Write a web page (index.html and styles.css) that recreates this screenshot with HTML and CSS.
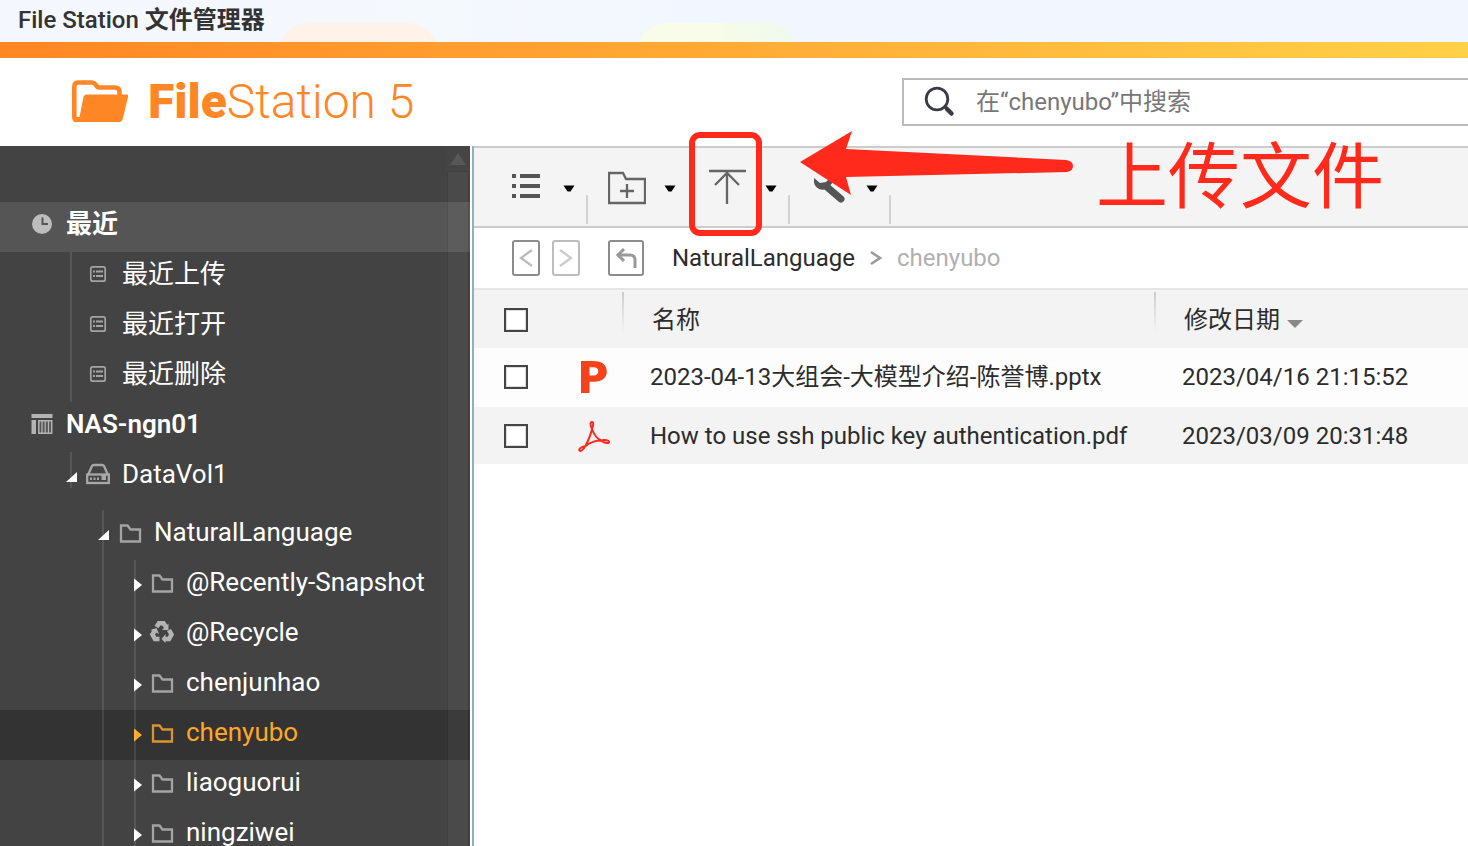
FILE: index.html
```html
<!DOCTYPE html>
<html lang="zh-CN">
<head>
<meta charset="utf-8">
<title>File Station 文件管理器</title>
<link rel="stylesheet" href="styles.css">
</head>
<body>
<svg class="defs" aria-hidden="true">
  <symbol id="folder" viewBox="0 0 24 24"><path d="M3 20.500V4.500H9.500L12.500 8.500H22V20.500Z" fill="none" stroke="currentColor" stroke-width="2.300"/></symbol>
  <symbol id="list-box" viewBox="0 0 24 24"><rect x="4.800" y="3.800" width="14.400" height="14.400" rx="2" fill="none" stroke="currentColor" stroke-width="1.700"/><path d="M7 8.500H9M10 8.500H17M7 13H9M10 13H17" stroke="currentColor" stroke-width="2"/></symbol>
  <symbol id="open" viewBox="0 0 14 20"><path d="M13 7V17H2Z" fill="currentColor"/></symbol>
  <symbol id="closed" viewBox="0 0 14 20"><path d="M6 5.500L14 12L6 18.500Z" fill="currentColor"/></symbol>
  <symbol id="drop" viewBox="0 0 12 8"><path d="M.500 1.500H11.500L7.500 7.500H4.500Z" fill="currentColor"/></symbol>
</svg>
<div class="app">
  <div class="titlebar">
    <span class="blob blob-peach"></span>
    <span class="blob blob-green"></span>
    <h1 class="window-title">File Station <b>文件管理器</b></h1>
  </div>
  <div class="strip"></div>
  <header class="header">
    <div class="brand">
      <svg class="brand-icon" viewBox="0 0 56 44" aria-hidden="true">
        <path d="M4 40Q2.300 40 2.300 36V7Q2.300 2.500 6 2.500H20Q22 2.500 23 4L25 6.500Q26 7.500 28 7.500H43Q47.500 7.500 47.500 12V17" fill="none" stroke="#ff8624" stroke-width="4.600"/>
        <path d="M11.500 17Q12 14.500 14.500 14.500H55Q56.500 14.500 56 17L51 38Q50 42 47 42H5Q1 42 .500 37L7.500 37Z" fill="#ff8624"/>
      </svg>
      <span class="brand-name"><b>File</b>Station 5</span>
    </div>
    <label class="search">
      <svg class="search-icon" viewBox="0 0 32 32" aria-hidden="true"><circle cx="14" cy="13" r="10.800" fill="none" stroke="#3b3b48" stroke-width="2.800"/><path d="M21.500 20.500L24.500 23.500" stroke="#3b3b48" stroke-width="3"/><path d="M24 23L28.500 27.500" stroke="#3b3b48" stroke-width="4.500" stroke-linecap="round"/></svg>
      <input class="search-input" type="text" aria-label="搜索" placeholder="在“chenyubo”中搜索">
    </label>
  </header>
  <div class="body">
    <nav class="sidebar">
      <a class="row row-hover" href="#"><i class="twist"></i>
        <svg class="ico" viewBox="0 0 24 24"><circle cx="12" cy="11" r="10" fill="#bdbdbd"/><path d="M12.500 4.500V11H18" fill="none" stroke="#555" stroke-width="2"/></svg><b>最近</b></a>
      <div class="branch guide-one">
        <a class="row d1" href="#"><i class="twist"></i><svg class="ico"><use href="#list-box"/></svg>最近上传</a>
        <a class="row d1" href="#"><i class="twist"></i><svg class="ico"><use href="#list-box"/></svg>最近打开</a>
        <a class="row d1" href="#"><i class="twist"></i><svg class="ico"><use href="#list-box"/></svg>最近删除</a>
      </div>
      <a class="row" href="#"><i class="twist"></i>
        <svg class="ico" viewBox="0 0 24 24"><path d="M1.500 1H22.500V5H1.500ZM1.500 7H6V21H1.500Z" fill="#b4b4b4"/><path d="M8.800 7.800H21.700V20.300H8.800Z" fill="#555" stroke="#b4b4b4" stroke-width="1.500"/><path d="M12 8V20M15.200 8V20M18.500 8V20" stroke="#b4b4b4" stroke-width="1.300"/></svg><b>NAS-ngn01</b></a>
      <div class="branch guide-short">
        <a class="row d1" href="#"><svg class="twist"><use href="#open"/></svg>
          <svg class="ico" viewBox="0 0 24 24"><path d="M2 12L6 3Q6.500 2 8 2H16Q17.500 2 18 3L22 12" fill="none" stroke="#a8a8a8" stroke-width="2.300"/><rect x="1.200" y="11.500" width="21.600" height="8.500" fill="none" stroke="#a8a8a8" stroke-width="2.300"/><path d="M4 14.500H6V17H4ZM7.500 14.500H9.500V17H7.500ZM11 14.500H13V17H11ZM15.500 12H20V17H15.500Z" fill="#a8a8a8"/></svg>DataVol1</a>
      </div>
      <div class="branch guide-two">
        <a class="row d2" href="#"><svg class="twist"><use href="#open"/></svg><svg class="ico"><use href="#folder"/></svg>NaturalLanguage</a>
        <div class="branch guide-three">
          <a class="row d3" href="#"><svg class="twist"><use href="#closed"/></svg><svg class="ico"><use href="#folder"/></svg>@Recently-Snapshot</a>
          <a class="row d3" href="#"><svg class="twist"><use href="#closed"/></svg>
            <svg class="ico" viewBox="0 0 24 24"><g fill="none" stroke="#b4b4b4" stroke-width="4.600"><path d="M6.500 6L9 2.300H13.500L16 6"/><path d="M19 9L21.500 13.500L19 18H14"/><path d="M9.500 18H5L2.500 13.500L5 9"/></g><path d="M18.500 2.500V9H12ZM15.500 13V22L11.500 18ZM.500 9L6.500 7L9 13Z" fill="#b4b4b4"/></svg>@Recycle</a>
          <a class="row d3" href="#"><svg class="twist"><use href="#closed"/></svg><svg class="ico"><use href="#folder"/></svg>chenjunhao</a>
          <a class="row d3 row-current" href="#" aria-current="true"><svg class="twist"><use href="#closed"/></svg><svg class="ico"><use href="#folder"/></svg>chenyubo</a>
          <a class="row d3" href="#"><svg class="twist"><use href="#closed"/></svg><svg class="ico"><use href="#folder"/></svg>liaoguorui</a>
          <a class="row d3" href="#"><svg class="twist"><use href="#closed"/></svg><svg class="ico"><use href="#folder"/></svg>ningziwei</a>
        </div>
      </div>
      <div class="scrollbar"><svg class="scroll-up" viewBox="0 0 16 12" aria-hidden="true"><path d="M8 0L16 12H0Z" fill="#575757"/></svg><div class="thumb"></div></div>
    </nav>
    <main class="main">
      <div class="toolbar">
        <button class="tool" type="button" aria-label="视图">
          <svg class="tool-icon" viewBox="0 0 38 40"><path d="M5 9H9M13 9H33M5 19H9M13 19H33M5 29H9M13 29H33" stroke="#555" stroke-width="4"/></svg>
          <svg class="drop"><use href="#drop"/></svg></button>
        <button class="tool tool-joined" type="button" aria-label="新建文件夹">
          <svg class="tool-icon" viewBox="0 0 38 40"><path d="M1 36V6H15L18 12H37V36ZM19 17V31M12 24H26" fill="none" stroke="#666" stroke-width="2.300"/></svg>
          <svg class="drop"><use href="#drop"/></svg></button>
        <button class="tool" type="button" aria-label="上传">
          <svg class="tool-icon" viewBox="0 0 38 40"><path d="M0 4H37M18 5V37M6 18L18 6L30 18" fill="none" stroke="#666" stroke-width="2.300"/></svg>
          <svg class="drop"><use href="#drop"/></svg><span class="mark-box"></span></button>
        <button class="tool" type="button" aria-label="工具">
          <svg class="tool-icon" viewBox="0 0 38 40"><path d="M17 20L31 32" stroke="#555" stroke-width="7" stroke-linecap="round"/><path d="M4 11Q3 19 9 22Q14 24 18 21L24 14Q25 8 20 4L20 11L16 15L10 16Z" fill="#555"/></svg>
          <svg class="drop"><use href="#drop"/></svg></button>
        <svg class="mark-arrow" viewBox="0 0 274 66" aria-hidden="true"><path d="M0 32L52 1L46 19L266 30Q273 31 273 36Q273 41 267 42L46 47L51 65Z" fill="#ff2a1c"/></svg>
        <span class="mark-text">上传文件</span>
      </div>
      <div class="pathbar">
        <button class="nav-btn" type="button" aria-label="后退"><svg viewBox="0 0 28 36"><rect x="1" y="1" width="26" height="34" rx="2" fill="none" stroke="#8b8b8b" stroke-width="2"/><path d="M20 10L9 18L20 26" fill="none" stroke="#bbb" stroke-width="2.300"/></svg></button>
        <button class="nav-btn" type="button" aria-label="前进"><svg viewBox="0 0 28 36"><rect x="1" y="1" width="26" height="34" rx="2" fill="none" stroke="#bdbdbd" stroke-width="2"/><path d="M8 10L19 18L8 26" fill="none" stroke="#ccc" stroke-width="2.300"/></svg></button>
        <button class="nav-btn nav-up" type="button" aria-label="上一级"><svg viewBox="0 0 36 36"><rect x="1" y="1" width="34" height="34" rx="2" fill="none" stroke="#8b8b8b" stroke-width="2"/><path d="M10 15H22Q27 15 27 20V28" fill="none" stroke="#999" stroke-width="3"/><path d="M16 9L10 15L16 21" fill="none" stroke="#999" stroke-width="3"/></svg></button>
        <div class="crumbs"><a class="crumb" href="#">NaturalLanguage</a><svg class="crumb-sep" viewBox="0 0 12 16"><path d="M1 2L10 8L1 14" fill="none" stroke="#999" stroke-width="2.500"/></svg><span class="crumb-now">chenyubo</span></div>
      </div>
      <table class="files">
        <colgroup><col class="c-check"><col class="c-icon"><col><col class="c-date"></colgroup>
        <thead><tr>
          <th class="check"><input type="checkbox" aria-label="全选"></th><td></td>
          <th class="split">名称</th>
          <th class="split">修改日期<svg class="sort" viewBox="0 0 16 8"><path d="M0 0H16L8 8Z" fill="#888"/></svg></th>
        </tr></thead>
        <tbody>
          <tr><td class="check"><input type="checkbox" aria-label="选择 pptx"></td>
            <td class="kind"><svg viewBox="0 0 32 32"><path fill-rule="evenodd" d="M3 0H15C24 0 28.800 4 28.800 10.500C28.800 17 24 20.800 16 20.800H11.500V32H3ZM11.500 6.200V14.500H15.500C18.500 14.500 20.300 13 20.300 10.300C20.300 7.700 18.500 6.200 15.500 6.200Z" fill="#f6421b"/></svg></td>
            <td class="text">2023-04-13大组会-大模型介绍-陈誉博.pptx</td><td class="text">2023/04/16 21:15:52</td></tr>
          <tr><td class="check"><input type="checkbox" aria-label="选择 pdf"></td>
            <td class="kind"><svg viewBox="0 0 32 32"><path d="M14 9C12 5 12 2 14 2C15.800 2 15.500 5 14 9C16.500 16 19 18.500 23 20.500C27 19.500 31 20.500 31 22C31 24 26 23 23 20.500C18 20.500 12 22.500 7.500 26C5 30 2.500 32 1.500 30.500C.500 29 3 27 7.500 26C10 21 12.500 16 14 9Z" fill="none" stroke="#fb2a20" stroke-width="2"/></svg></td>
            <td class="text">How to use ssh public key authentication.pdf</td><td class="text">2023/03/09 20:31:48</td></tr>
        </tbody>
      </table>
    </main>
  </div>
</div>
</body>
</html>
```
FILE: styles.css
```css
* { box-sizing: border-box; }
body {
  margin: 0;
  font-family: Roboto, "Noto Sans CJK SC", sans-serif;
  font-size: 24px;
  color: #2c2c2c;
  background: #fff;
}
a { color: inherit; text-decoration: none; }
button { padding: 0; border: 0; background: none; color: inherit; font: inherit; }
svg { display: block; flex: none; }
.defs { position: absolute; width: 0; height: 0; }
.app { display: flex; flex-direction: column; height: 100vh; overflow: hidden; }

.titlebar {
  position: relative;
  display: flex;
  align-items: center;
  height: 42px;
  flex: none;
  padding: 0 18px 2px;
  overflow: hidden;
  background: linear-gradient(90deg, #f5f7fe, #f4f9fe 30%, #f2f6fe 50%, #f2f6fe);
}
.blob { position: absolute; top: 23px; width: 160px; height: 60px; border-radius: 56px; }
.blob-peach { left: 278px; background: #fff3e9; }
.blob-green { left: 637px; background: linear-gradient(90deg, #f8fce8 50%, #eef9ed); }
.window-title { position: relative; margin: 0; font-size: 24px; line-height: 36px; font-weight: 500; color: #333; }
.window-title b { font-weight: 700; }
.strip { height: 16px; flex: none; background: linear-gradient(90deg, #ff8624, #ffd147); }

.header { display: flex; align-items: center; justify-content: space-between; height: 88px; flex: none; padding-left: 72px; }
.brand { display: flex; align-items: center; gap: 20px; color: #ff8624; }
.brand-icon { width: 56px; height: 44px; }
.brand-name { font-size: 48px; line-height: 56px; font-weight: 300; }
.brand-name b { font-weight: 900; }
.search { display: flex; align-items: center; gap: 21px; width: 566px; height: 48px; padding-left: 19px; border: 2px solid #bbb; border-right: 0; }
.search-icon { width: 32px; height: 32px; }
.search-input { flex: 1; min-width: 0; padding: 0; border: 0; outline: 0; background: none; font: inherit; line-height: 36px; }
.search-input::placeholder { color: #777; opacity: 1; }

.body { display: flex; flex: 1; min-height: 0; }
.sidebar { position: relative; width: 470px; flex: none; padding-top: 56px; overflow: hidden; background: #434343; color: #fff; font-size: 26px; }
.row { display: flex; align-items: center; height: 50px; padding: 0 24px 6px 8px; line-height: 36px; white-space: nowrap; }
.row b { font-weight: 600; }
.row-hover { background: #555; }
.row-current { background: #333; color: #ffa726; }
.d1 { padding-left: 64px; }
.d2 { padding-left: 96px; }
.d3 { padding-left: 128px; }
.twist { width: 14px; height: 20px; margin: 2px 8px 0 0; }
.ico { width: 24px; height: 24px; margin: 2px 12px 0 0; color: #a4a4a4; }
.row-current .ico { color: #d9942e; }
.branch { position: relative; }
.branch::before { content: ""; position: absolute; z-index: 1; top: 0; bottom: 0; width: 2px; background: rgba(255, 255, 255, .1); }
.guide-one::before, .guide-short::before { left: 70px; }
.guide-short { margin-bottom: 8px; }
.guide-short::before { bottom: 14px; }
.guide-two::before { left: 102px; }
.guide-three::before { left: 134px; }
.scrollbar { position: absolute; top: 0; right: 0; bottom: 0; display: flex; flex-direction: column; align-items: center; width: 24px; padding: 7px 2px 0 2px; background: rgba(255, 255, 255, .01); }
.scroll-up { width: 16px; height: 12px; }
.thumb { flex: 1; width: 20px; margin-top: 7px; background: rgba(255, 255, 255, .03); outline: 1px solid rgba(0, 0, 0, .08); }

.main { flex: 1; min-width: 0; margin-left: 2px; border-left: 2px solid #8fb1bd; }
.toolbar { position: relative; display: flex; height: 82px; padding-left: 13px; border-top: 2px solid #ccc; border-bottom: 2px solid #ccc; background: #f4f4f4; }
.tool { position: relative; display: flex; align-items: center; gap: 18px; width: 101px; padding-left: 20px; background: linear-gradient(#d2d2d2, #d2d2d2) right 0 bottom 2px / 2px 29px no-repeat; }
.tool-joined { background: none; }
.tool-icon { width: 38px; height: 40px; }
.drop { width: 12px; height: 8px; margin-top: 2px; color: #000; }
.mark-box { position: absolute; left: 0; top: -16px; width: 73px; height: 104px; border: 6px solid #ff2a1c; border-radius: 11px; }
.mark-arrow { position: absolute; left: 326px; top: -18px; width: 274px; height: 66px; }
.mark-text { position: absolute; left: 622px; top: -22px; font-size: 72px; line-height: 104px; font-weight: 400; color: #ff2a1c; white-space: nowrap; }

.pathbar { display: flex; align-items: center; gap: 12px; height: 62px; padding-left: 38px; border-bottom: 2px solid #e6e6e6; }
.nav-btn { width: 28px; height: 36px; }
.nav-up { width: 36px; margin: 0 16px; }
.crumbs { display: flex; align-items: center; gap: 15px; line-height: 36px; }
.crumb-sep { width: 12px; height: 16px; }
.crumb-now { color: #b0b0b0; }

.files { width: 100%; table-layout: fixed; border-collapse: collapse; line-height: 36px; }
.c-check { width: 88px; }
.c-icon { width: 60px; }
.c-date { width: 314px; }
.files th, .files td { padding: 0; text-align: left; font-weight: 400; white-space: nowrap; }
.files thead { height: 58px; background: #f3f3f3; }
.files thead th { padding-top: 2px; }
.files tbody tr { height: 59px; background: #fdfdfd; }
.files tbody tr:first-child td { padding-bottom: 2px; }
.files tbody tr:nth-child(even) { height: 57px; background: #f3f3f3; }
.files .check { padding-left: 30px; }
.files .split { padding-left: 30px; background: linear-gradient(#ccc, rgba(204, 204, 204, 0)) 0 2px / 2px 40px no-repeat; }
.files .text { padding-left: 28px; }
.kind { vertical-align: middle; }
.kind svg { width: 32px; height: 32px; margin-left: 16px; }
.sort { display: inline-block; width: 16px; height: 8px; margin-left: 7px; }
.files input { display: block; appearance: none; width: 24px; height: 24px; margin: 0; border: 2px solid #444; background: #fff; box-shadow: inset 0 0 0 1px #ddd; }
```
